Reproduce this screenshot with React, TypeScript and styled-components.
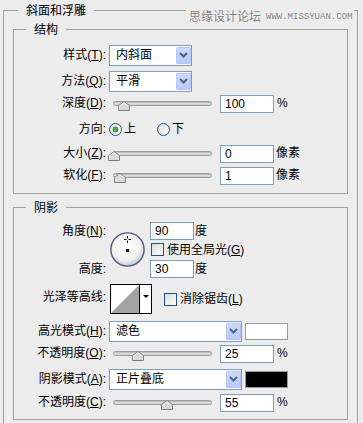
import styled, { createGlobalStyle } from "styled-components"

const GlobalStyle = createGlobalStyle`
  html, body {
    margin: 0;
    padding: 0;
    width: 363px;
    height: 423px;
    overflow: hidden;
    background: #ececec;
  }
  body {
    font-family: "Liberation Sans", "Noto Sans CJK SC", sans-serif;
    font-size: 12px;
    line-height: 16px;
    color: #000;
  }
`

const Page = styled.div`
  position: relative;
  padding: 10px 5px 0 3px;
`

// site watermark laid over the top border
const Watermark = styled.div`
  position: absolute;
  top: 5px;
  left: 186px;
  height: 21px;
  padding: 0 2px 0 3px;
  background: #ececec;
  display: flex;
  align-items: center;
  color: #7b7b7b;
  text-shadow: 0 0 1px #fff, 0 0 1px #fff;
`
const WmCn = styled.span`
  font-family: "Noto Sans CJK SC", sans-serif;
  font-size: 12px;
`
const WmUrl = styled.span`
  margin-left: 5px;
  padding-top: 2px;
  font-family: "Liberation Mono", monospace;
  font-size: 9px;
`

const Outer = styled.div`
  border: 1px solid #a0a0a0;
  padding: 0 9px 12px;
`
const Title = styled.div<{ $ml: number }>`
  width: fit-content;
  height: 16px;
  margin: -8px 0 0 ${p => p.$ml}px;
  padding: 0 8px;
  background: #ececec;
`
const Section = styled.div<{ $mt: number; $pb: number }>`
  margin-top: ${p => p.$mt}px;
  border: 1px solid #a0a0a0;
  padding-bottom: ${p => p.$pb}px;
`
const Row = styled.div<{ $mt?: number; $h?: number }>`
  display: flex;
  align-items: center;
  height: ${p => p.$h ?? 22}px;
  margin-top: ${p => p.$mt ?? 0}px;
`
const Label = styled.div<{ $pb?: number }>`
  width: 92px;
  flex-shrink: 0;
  text-align: right;
  white-space: nowrap;
  padding-bottom: ${p => p.$pb ?? 0}px;
`
const Key = styled.span`
  text-decoration: underline;
  text-underline-offset: 1px;
`

const SelectBox = styled.div<{ $w: number }>`
  margin-left: 3px;
  width: ${p => p.$w}px;
  height: 21px;
  box-sizing: border-box;
  border: 1px solid #7f9db9;
  background: #fff;
  padding: 1px 0 1px 6px;
  display: flex;
  align-items: center;
  justify-content: space-between;
`
const ArrowBtn = styled.div`
  width: 15px;
  height: 17px;
  box-sizing: border-box;
  border: 1px solid #b3c7f5;
  border-radius: 1px;
  background: linear-gradient(#cbdafd, #b7cbf9);
  display: flex;
  align-items: center;
  justify-content: center;
`
const Swatch = styled.div<{ $color: string }>`
  margin-left: 3px;
  width: 43px;
  height: 17px;
  box-sizing: border-box;
  border: 1px solid #9a9a9a;
  background: ${p => p.$color};
`

const Track = styled.div<{ $ml?: number }>`
  position: relative;
  margin-left: ${p => p.$ml ?? 7}px;
  width: 99px;
  height: 5px;
  box-sizing: border-box;
  border: 1px solid #9b9b9b;
  border-radius: 3px;
  background: linear-gradient(#b4b4b4, #e2e2e2 60%, #c8c8c8);
`
const Thumb = styled.svg`
  position: absolute;
  top: -1px;
  width: 12px;
  height: 10px;
`

const NumBox = styled.div<{ $w?: number; $ml?: number; $mt?: number }>`
  margin-left: ${p => p.$ml ?? 8}px;
  margin-top: ${p => p.$mt ?? 2}px;
  width: ${p => p.$w ?? 54}px;
  height: 18px;
  box-sizing: border-box;
  border: 1px solid #7f9db9;
  background: #fff;
  padding-left: 4px;
  line-height: 16px;
`
const Unit = styled.span<{ $ml?: number }>`
  margin-left: ${p => p.$ml ?? 3}px;
`

const RadioItem = styled.label<{ $ml: number }>`
  display: flex;
  align-items: center;
  margin-left: ${p => p.$ml}px;
  gap: 2px;
`
const Radio = styled.span<{ $on?: boolean }>`
  width: 13px;
  height: 13px;
  box-sizing: border-box;
  border-radius: 50%;
  border: 1px solid #1c5180;
  background: ${p =>
    p.$on
      ? "radial-gradient(circle, #55d055 0, #2fa52f 2px, #1f8f1f 2.6px, transparent 3.2px), linear-gradient(135deg, #dcdcd7, #fff)"
      : "linear-gradient(135deg, #dcdcd7, #fff)"};
`
const Check = styled.span<{ $ml: number }>`
  margin-left: ${p => p.$ml}px;
  margin-right: 3px;
  width: 13px;
  height: 13px;
  box-sizing: border-box;
  border: 1px solid #1c5180;
  background: linear-gradient(135deg, #dcdcd7, #fff);
`

const AngleBlock = styled.div`
  display: flex;
  height: 57px;
  margin-top: 5px;
`
const AngleLabels = styled.div`
  width: 92px;
  display: flex;
  flex-direction: column;
  justify-content: space-between;
`
const SubLabel = styled.div`
  height: 19px;
  display: flex;
  align-items: center;
  justify-content: flex-end;
`
const Dial = styled.svg`
  margin-left: 4px;
  align-self: center;
  width: 35px;
  height: 35px;
`
const AngleRight = styled.div`
  margin-left: 5px;
  display: flex;
  flex-direction: column;
`
const SubRow = styled.div`
  height: 19px;
  display: flex;
  align-items: center;
`

const ContourBox = styled.div`
  margin-left: 4px;
  width: 42px;
  height: 30px;
  box-sizing: border-box;
  border: 1px solid #000;
  background: #fff;
  display: flex;
`
const ContourArrow = styled.div`
  width: 12px;
  box-sizing: border-box;
  border-left: 1px solid #000;
  padding-top: 10px;
  display: flex;
  justify-content: center;
  &::after {
    content: "";
    height: 0;
    border-left: 3px solid transparent;
    border-right: 3px solid transparent;
    border-top: 3px solid #000;
  }
`

function Select({ w, text }: { w: number; text: string }) {
  return (
    <SelectBox $w={w}>
      <span>{text}</span>
      <ArrowBtn>
        <svg width="9" height="6" viewBox="0 0 9 6">
          <path d="M1 1 L4.5 4.5 L8 1" fill="none" stroke="#4d6185" strokeWidth="2" />
        </svg>
      </ArrowBtn>
    </SelectBox>
  )
}

function Slider({ value }: { value: number }) {
  return (
    <Track>
      <Thumb viewBox="0 0 12 10" style={{ left: -6 + Math.round(value * 96) }}>
        <path d="M0.5 9.5 V4.5 L6 0.5 L11.5 4.5 V9.5 Z" fill="#dadada" stroke="#7b7b7b" />
        <path d="M1.5 8.5 V5 L6 1.8 L10.5 5" fill="none" stroke="#f4f4f4" />
      </Thumb>
    </Track>
  )
}

export default function App() {
  return (
    <>
      <GlobalStyle />
      <Page>
        <Watermark>
          <WmCn>思缘设计论坛</WmCn>
          <WmUrl>WWW.MISSYUAN.COM</WmUrl>
        </Watermark>
        <Outer>
          <Title $ml={5}>斜面和浮雕</Title>
          <Section $mt={10} $pb={7}>
            <Title $ml={12}>结构</Title>
            <Row $mt={6}>
              <Label>样式(<Key>T</Key>):</Label>
              <Select w={83} text="内斜面" />
            </Row>
            <Row $mt={4}>
              <Label>方法(<Key>Q</Key>):</Label>
              <Select w={83} text="平滑" />
            </Row>
            <Row>
              <Label>深度(<Key>D</Key>):</Label>
              <Slider value={0.1} />
              <NumBox>100</NumBox>
              <Unit>%</Unit>
            </Row>
            <Row $mt={4}>
              <Label>方向:</Label>
              <RadioItem $ml={3}><Radio $on />上</RadioItem>
              <RadioItem $ml={21}><Radio />下</RadioItem>
            </Row>
            <Row $mt={2}>
              <Label>大小(<Key>Z</Key>):</Label>
              <Slider value={0} />
              <NumBox>0</NumBox>
              <Unit $ml={2}>像素</Unit>
            </Row>
            <Row>
              <Label>软化(<Key>F</Key>):</Label>
              <Slider value={1 / 16} />
              <NumBox>1</NumBox>
              <Unit $ml={2}>像素</Unit>
            </Row>
          </Section>

          <Section $mt={13} $pb={6}>
            <Title $ml={12}>阴影</Title>
            <AngleBlock>
              <AngleLabels>
                <SubLabel>角度(<Key>N</Key>):</SubLabel>
                <SubLabel>高度:</SubLabel>
              </AngleLabels>
              <Dial viewBox="0 0 35 35">
                <defs>
                  <radialGradient id="dialFill" cx="45%" cy="40%" r="60%">
                    <stop offset="0" stopColor="#ffffff" />
                    <stop offset="0.72" stopColor="#f0f0ee" />
                    <stop offset="1" stopColor="#c5c9d6" />
                  </radialGradient>
                </defs>
                <circle cx="17.5" cy="17.5" r="16.6" fill="url(#dialFill)" stroke="#4b5a86" strokeWidth="1.4" />
                <path d="M17.5 4v2.5M17.5 8.5V11M14 7.5h2.5M18.5 7.5H21" stroke="#000" strokeWidth="1" />
                <rect x="16" y="17" width="3" height="3" fill="#000" />
              </Dial>
              <AngleRight>
                <SubRow>
                  <NumBox $w={44} $ml={0} $mt={0}>90</NumBox>
                  <Unit $ml={1}>度</Unit>
                </SubRow>
                <SubRow>
                  <Check $ml={1} />
                  使用全局光(<Key>G</Key>)
                </SubRow>
                <SubRow>
                  <NumBox $w={44} $ml={0} $mt={0}>30</NumBox>
                  <Unit $ml={1}>度</Unit>
                </SubRow>
              </AngleRight>
            </AngleBlock>
            <Row $mt={6} $h={30}>
              <Label $pb={4}>光泽等高线:</Label>
              <ContourBox>
                <svg width="28" height="28" viewBox="0 0 28 28">
                  <polygon points="0,28 28,0 28,28" fill="#a3a3a3" />
                </svg>
                <ContourArrow />
              </ContourBox>
              <Check $ml={12} />
              消除锯齿(<Key>L</Key>)
            </Row>
            <Row $mt={6}>
              <Label>高光模式(<Key>H</Key>):</Label>
              <Select w={133} text="滤色" />
              <Swatch $color="#ffffff" />
            </Row>
            <Row>
              <Label>不透明度(<Key>O</Key>):</Label>
              <Slider value={0.25} />
              <NumBox>25</NumBox>
              <Unit>%</Unit>
            </Row>
            <Row $mt={4}>
              <Label>阴影模式(<Key>A</Key>):</Label>
              <Select w={133} text="正片叠底" />
              <Swatch $color="#000000" />
            </Row>
            <Row $mt={1}>
              <Label>不透明度(<Key>C</Key>):</Label>
              <Slider value={0.55} />
              <NumBox>55</NumBox>
              <Unit>%</Unit>
            </Row>
          </Section>
        </Outer>
      </Page>
    </>
  )
}
